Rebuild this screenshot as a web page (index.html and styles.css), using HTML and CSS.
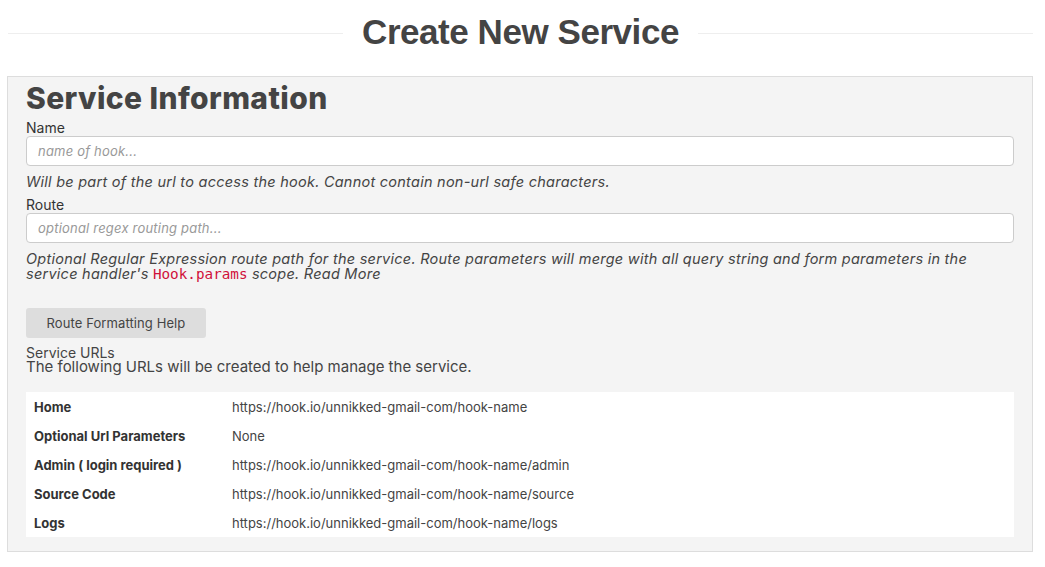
FILE: index.html
```html
<!DOCTYPE html>
<html>
<head>
<meta charset="utf-8">
<link rel="stylesheet" href="styles.css">
</head>
<body>
<div class="page-title">
  <span class="rule"></span>
  <h1>Create New Service</h1>
  <span class="rule"></span>
</div>
<div class="panel">
  <h2>Service Information</h2>
  <label class="lbl">Name</label>
  <input class="field" type="text" placeholder="name of hook...">
  <p class="help">Will be part of the url to access the hook. Cannot contain non-url safe characters.</p>
  <label class="lbl">Route</label>
  <input class="field" type="text" placeholder="optional regex routing path...">
  <p class="help help-wide">Optional Regular Expression route path for the service. Route parameters will merge with all query string and form parameters in the service handler's <code>Hook.params</code> scope. Read More</p>
  <button class="btn">Route Formatting Help</button>
  <div class="urls-title">Service URLs</div>
  <div class="urls-sub">The following URLs will be created to help manage the service.</div>
  <table class="urls">
    <tr><th>Home</th><td>https://hook.io/unnikked-gmail-com/hook-name</td></tr>
    <tr><th>Optional Url Parameters</th><td>None</td></tr>
    <tr><th>Admin ( login required )</th><td>https://hook.io/unnikked-gmail-com/hook-name/admin</td></tr>
    <tr><th>Source Code</th><td>https://hook.io/unnikked-gmail-com/hook-name/source</td></tr>
    <tr><th>Logs</th><td>https://hook.io/unnikked-gmail-com/hook-name/logs</td></tr>
  </table>
</div>
</body>
</html>
```
FILE: styles.css
```css
html, body { margin: 0; padding: 0; background: #fff; }
body {
  padding: 0 12px 0 7px;
  font-family: Inter, "Noto Sans", sans-serif;
  color: #444;
}
.page-title {
  display: flex;
  align-items: center;
  gap: 19px;
  height: 70px;
  padding-left: 1px;
  margin-top: -2px;
}
.page-title .rule {
  flex: 1;
  height: 1px;
  background: #eee;
}
.page-title h1 {
  margin: 0 0 3px 0;
  font-family: "Liberation Sans", Arial, sans-serif;
  font-weight: bold;
  font-size: 35px;
  letter-spacing: -0.45px;
  color: #444;
}
.panel {
  margin-top: 8px;
  background: #f4f4f4;
  border: 1px solid #ddd;
  padding: 2px 18px 14px 18px;
}
.panel h2 {
  margin: 0;
  font-size: 30px;
  font-weight: 800;
  color: #444;
  line-height: 38px;
  letter-spacing: 0.4px;
}
.lbl {
  display: block;
  font-size: 14px;
  line-height: 17px;
  color: #333;
  margin-top: 2px;
}
.field {
  display: block;
  box-sizing: border-box;
  width: 100%;
  height: 30px;
  margin: 0;
  padding: 0 11px;
  border: 1px solid #ccc;
  border-radius: 4px;
  background: #fff;
  font-family: inherit;
  font-size: 13px;
}
.field::placeholder { color: #999; font-style: italic; letter-spacing: 0.2px; }
.help {
  margin: 8px 0 0 0;
  font-size: 14.5px;
  font-style: italic;
  line-height: 15px;
  letter-spacing: 0.25px;
  color: #444;
}
.help + .lbl { margin-top: 7px; }
.help-wide { margin-top: 8px; }
.help code {
  font-family: "DejaVu Sans Mono", monospace;
  font-style: normal;
  color: #d0103a;
  font-size: 14.3px;
  letter-spacing: 0;
}
.btn {
  display: block;
  margin-top: 26px;
  width: 180px;
  height: 30px;
  border: none;
  border-radius: 3px;
  background: #ddd;
  color: #444;
  font-family: inherit;
  font-size: 13px;
  letter-spacing: 0.1px;
}
.urls-title {
  margin-top: 8px;
  font-size: 14px;
  line-height: 14px;
  color: #444;
}
.urls-sub {
  font-size: 15px;
  line-height: 14px;
  color: #444;
}
.urls {
  margin-top: 18px;
  width: 100%;
  background: #fff;
  border-collapse: collapse;
}
.urls th, .urls td {
  height: 29px;
  padding: 0 8px;
  font-size: 13px;
  text-align: left;
  vertical-align: middle;
  color: #444;
}
.urls th { width: 182px; font-weight: 700; color: #333; }
.urls td { font-weight: 400; }
```
